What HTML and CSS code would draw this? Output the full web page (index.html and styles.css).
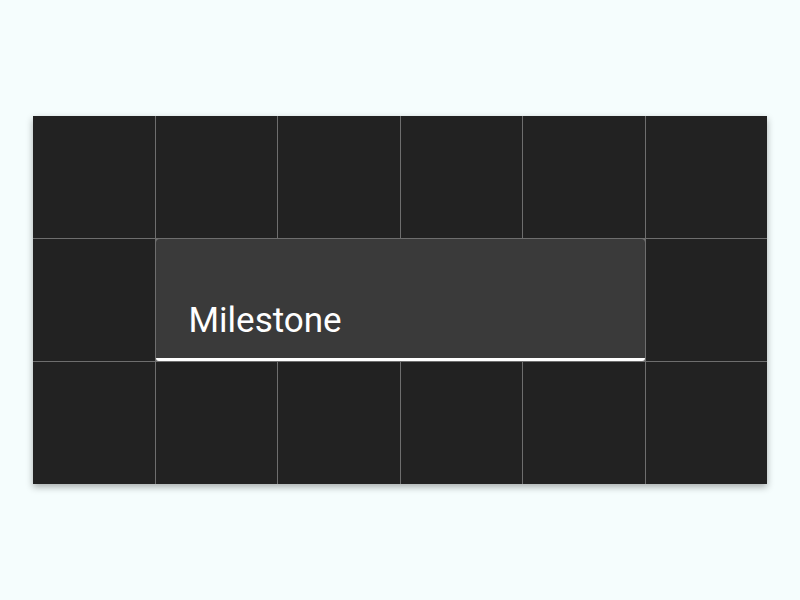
FILE: index.html
```html
<!DOCTYPE html>
<html>
<head>
<meta charset="utf-8">
<link rel="stylesheet" href="styles.css">
</head>
<body>
<div class="stage">
  <div class="grid">
    <div class="cell"></div><div class="cell"></div><div class="cell"></div>
    <div class="cell"></div><div class="cell"></div><div class="cell"></div>
    <div class="cell"></div>
    <div class="field"><span class="label">Milestone</span></div>
    <div class="cell"></div>
    <div class="cell"></div><div class="cell"></div><div class="cell"></div>
    <div class="cell"></div><div class="cell"></div><div class="cell"></div>
  </div>
</div>
</body>
</html>
```
FILE: styles.css
```css
html, body {
  margin: 0;
  padding: 0;
  background: #f5fdfd;
}
.stage {
  width: 800px;
  height: 600px;
  display: flex;
  align-items: flex-start;
  justify-content: center;
  padding-top: 116px;
  box-sizing: border-box;
}
.grid {
  width: 734px;
  height: 368px;
  display: grid;
  grid-template-columns: repeat(6, 1fr);
  grid-template-rows: repeat(3, 1fr);
  gap: 1px;
  background: #6e6e6e;
  box-shadow: 0 3px 7px rgba(0, 0, 0, 0.32);
}
.cell {
  background: #222222;
}
.field {
  grid-column: 2 / 6;
  background: #3a3a3a;
  border-radius: 4px 4px 3px 3px;
  border-bottom: 3px solid #ffffff;
  display: flex;
  align-items: flex-end;
  padding: 0 0 17px 33px;
  box-sizing: border-box;
}
.label {
  font-family: Roboto, "Noto Sans", sans-serif;
  font-size: 35px;
  line-height: 40px;
  color: #ffffff;
}
```
